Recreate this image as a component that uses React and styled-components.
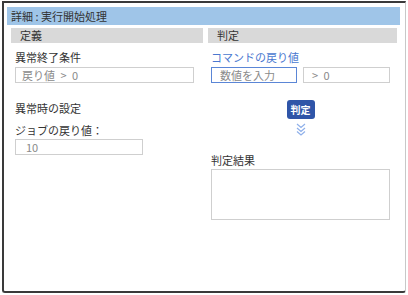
import React from 'react'
import styled, { createGlobalStyle } from 'styled-components'

const Global = createGlobalStyle`
body{
    margin:0;
    background:#fff;
    font-family:"Noto Sans CJK JP","Noto Sans",sans-serif;
    color:#333;
}
`
const Frame = styled.div`
box-sizing:border-box;
margin:1px 0 0 2px;
width:404px;
height:292px;
border:2px solid #3a3a3a;
border-right:1px solid #c8c8c8;
border-radius:0 0 3px 3px;
padding:4px 5px 0 3px;
background:#fff;
`
const TitleBar = styled.div`
height:18px;
background:#9fc5e8;
font-size:11px;
line-height:18px;
padding-left:4px;
color:#333;
`
const Columns = styled.div`
display:grid;
grid-template-columns:192px 189px;
column-gap:5px;
margin:3px 0 0 4px;
`
const Column = styled.div`
display:flex;
flex-direction:column;
`
const SectionHead = styled.div`
height:15px;
background:#d9d9d9;
font-size:11px;
line-height:15px;
padding-left:9px;
color:#333;
`
const Label = styled.div`
font-size:11px;
line-height:14px;
margin-top:${p => p.$mt || 0}px;
margin-left:${p => p.$ml ?? 4}px;
color:${p => p.$blue ? '#4a78d0' : '#333'};
`
const Input = styled.div`
box-sizing:border-box;
height:16px;
width:${p => p.$w}px;
border:1px solid ${p => p.$active ? '#5b86d6' : '#cfcfcf'};
font-size:11px;
line-height:14px;
word-spacing:3px;
padding-left:${p => p.$pl || 6}px;
color:#8a8a8a;
background:#fff;
`
const Field = styled.div`
margin-top:${p => p.$mt || 0}px;
margin-left:4px;
`
const InputRow = styled.div`
display:flex;
gap:6px;
margin:3px 0 0 3px;
`
const Center = styled.div`
display:flex;
flex-direction:column;
align-items:center;
margin:17px 0 0 3px;
width:179px;
`
const JudgeButton = styled.div`
width:28px;
height:19px;
border-radius:3px;
background:#2f55a8;
color:#fff;
font-size:10px;
font-weight:700;
line-height:19px;
text-align:center;
`
const Chevrons = styled.svg`
margin-top:3px;
`
const ResultBox = styled.div`
box-sizing:border-box;
margin:2px 0 0 3px;
width:179px;
height:51px;
border:1px solid #cfcfcf;
`

export default function App() {
    return (
        <>
            <Global />
            <Frame>
                <TitleBar>詳細 : 実行開始処理</TitleBar>
                <Columns>
                    <Column>
                        <SectionHead>定義</SectionHead>
                        <Label $mt={7}>異常終了条件</Label>
                        <Field $mt={3}><Input $w={179}>戻り値 &gt; 0</Input></Field>
                        <Label $mt={18}>異常時の設定</Label>
                        <Label $mt={8}>ジョブの戻り値：</Label>
                        <Field $mt={2}><Input $w={128} $pl={10}>10</Input></Field>
                    </Column>
                    <Column>
                        <SectionHead>判定</SectionHead>
                        <Label $mt={7} $ml={3} $blue>コマンドの戻り値</Label>
                        <InputRow>
                            <Input $w={86} $active $pl={8}>数値を入力</Input>
                            <Input $w={87} $pl={8}>&gt; 0</Input>
                        </InputRow>
                        <Center>
                            <JudgeButton>判定</JudgeButton>
                            <Chevrons width="12" height="14" viewBox="0 0 12 14">
                                <path d="M2 2 L6 5.5 L10 2 M2 6 L6 9.5 L10 6 M2 9.5 L6 13 L10 9.5" fill="none" stroke="#8fb0ea" strokeWidth="1.2" />
                            </Chevrons>
                        </Center>
                        <Label $mt={17} $ml={3}>判定結果</Label>
                        <ResultBox />
                    </Column>
                </Columns>
            </Frame>
        </>
    )
}
